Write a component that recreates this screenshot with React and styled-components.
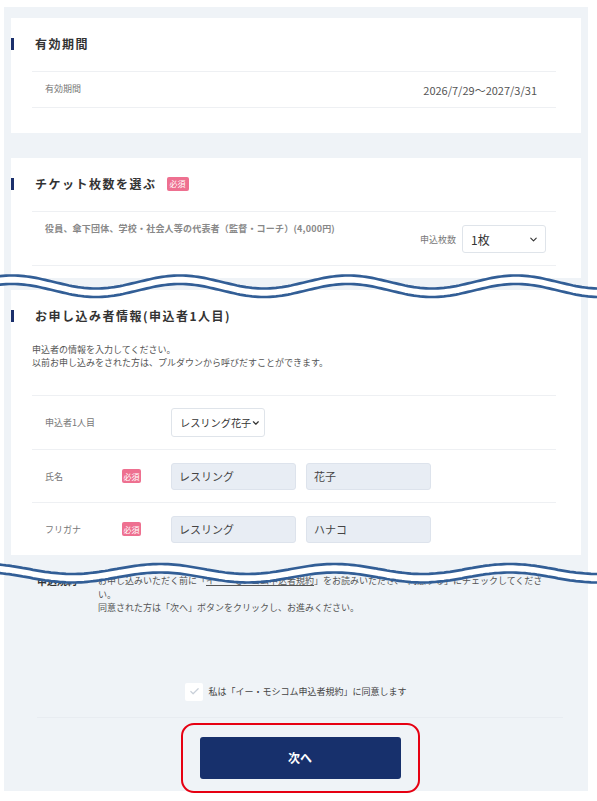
import React from 'react';
import styled, { createGlobalStyle } from 'styled-components';
import { ChevronDown, Check } from 'lucide-react';

const GlobalStyle = createGlobalStyle`
    * { box-sizing: border-box; }
    body {
        margin: 0;
        background: #fff;
        font-family: "Noto Sans CJK JP", "Noto Sans", sans-serif;
        color: #444;
    }
`;

const wavePoints = (center, amp, crest, period) => {
    const pts = [];
    for (let x = -6; x <= 603; x += 3) {
        pts.push([x, center - amp * Math.cos((2 * Math.PI * (x - crest)) / period)]);
    }
    return pts;
};

const toPath = (pts) => 'M' + pts.map(([x, y]) => `${x.toFixed(1)} ${y.toFixed(1)}`).join(' L');

// torn-edge marker laid over the page
const Wave = ({ y, amp, crest, period, gap = 8.5 }) => {
    const top = wavePoints(20, amp, crest, period);
    const bottom = top.map(([x, v]) => [x, v + gap]);
    const fill = toPath(top) + ' L' + [...bottom].reverse().map(([x, v]) => `${x.toFixed(1)} ${v.toFixed(1)}`).join(' L') + ' Z';
    return (
        <S.WaveSvg $top={y - 20} width="597" height="50" viewBox="0 0 597 50">
            <path d={fill} fill="#fff" />
            <path d={toPath(top)} fill="none" stroke="#325e96" strokeWidth="2.7" />
            <path d={toPath(bottom)} fill="none" stroke="#325e96" strokeWidth="2.7" />
        </S.WaveSvg>
    );
};

const App = () => {
    return (
        <S.Page>
            <GlobalStyle />
            <S.Panel>
                {/* 有効期間 */}
                <S.Card $pb={25}>
                    <S.Title>有効期間</S.Title>
                    <S.Row $h={37} $last>
                        <S.Label $lift>有効期間</S.Label>
                        <S.Value>2026/7/29〜2027/3/31</S.Value>
                    </S.Row>
                </S.Card>

                {/* チケット枚数 */}
                <S.Card $pb={12} $mt={25}>
                    <S.Title>
                        チケット枚数を選ぶ
                        <S.Badge $big>必須</S.Badge>
                    </S.Title>
                    <S.Row $h={55} $last>
                        <S.TicketName>役員、傘下団体、学校・社会人等の代表者（監督・コーチ）(4,000円)</S.TicketName>
                        <S.Quantity>
                            <S.Label>申込枚数</S.Label>
                            <S.SelectBox $w={84} $h={28}>
                                <S.SelectText $size={12}>1枚</S.SelectText>
                                <ChevronDown size={11} strokeWidth={2.4} color="#333" />
                            </S.SelectBox>
                        </S.Quantity>
                    </S.Row>
                </S.Card>

                {/* 申込者情報 */}
                <S.Card $pb={0} $mt={12}>
                    <S.Title>お申し込み者情報(申込者1人目)</S.Title>
                    <S.Note>
                        申込者の情報を入力してください。<br />
                        以前お申し込みをされた方は、プルダウンから呼びだすことができます。
                    </S.Note>
                    <S.FormRow $h={54}>
                        <S.Label>申込者1人目</S.Label>
                        <span />
                        <S.Fields>
                            <S.SelectBox $w={94} $h={29} $tight>
                                <S.SelectText $size={10.2}>レスリング花子</S.SelectText>
                                <ChevronDown size={10} strokeWidth={3} color="#333" />
                            </S.SelectBox>
                        </S.Fields>
                    </S.FormRow>
                    <S.FormRow $h={53}>
                        <S.Label>氏名</S.Label>
                        <S.Badge>必須</S.Badge>
                        <S.Fields>
                            <S.Input readOnly value="レスリング" />
                            <S.Input readOnly value="花子" />
                        </S.Fields>
                    </S.FormRow>
                    <S.FormRow $h={53}>
                        <S.Label>フリガナ</S.Label>
                        <S.Badge>必須</S.Badge>
                        <S.Fields>
                            <S.Input readOnly value="レスリング" />
                            <S.Input readOnly value="ハナコ" />
                        </S.Fields>
                    </S.FormRow>
                </S.Card>

                {/* 申込規約 */}
                <S.Terms>
                    <S.TermsLabel>申込規約</S.TermsLabel>
                    <S.TermsText>
                        お申し込みいただく前に「<S.TermsLink>イー・モシコム申込者規約</S.TermsLink>」をお読みいただき、「同意する」にチェックしてください。<br />
                        同意された方は「次へ」ボタンをクリックし、お進みください。
                    </S.TermsText>
                </S.Terms>

                <S.Agree>
                    <S.CheckBox>
                        <Check size={11} strokeWidth={2.6} color="#c9d0d9" />
                    </S.CheckBox>
                    <S.AgreeText>私は「イー・モシコム申込者規約」に同意します</S.AgreeText>
                </S.Agree>

                <S.Footer>
                    <S.Highlight>
                        <S.NextButton>次へ</S.NextButton>
                    </S.Highlight>
                </S.Footer>
            </S.Panel>

            <Wave y={281.5} amp={6.5} crest={180} period={168} />
            <Wave y={568.5} amp={5} crest={160} period={175} />
        </S.Page>
    );
};

const S = {};

S.Page = styled.div`
    position: relative;
    width: 597px;
    min-height: 801px;
    padding-top: 7px;
    overflow: hidden;
`;

S.Panel = styled.div`
    width: 584px;
    margin-left: 4px;
    background: #eff3f7;
    padding: 11px 7px 0;
`;

S.Card = styled.div`
    background: #fff;
    margin-top: ${({ $mt }) => $mt || 0}px;
    padding: 19px 25px ${({ $pb }) => $pb}px 21px;
`;

S.Title = styled.h2`
    display: flex;
    align-items: center;
    height: 13px;
    margin: 0 0 21px -21px;
    font-size: 12px;
    font-weight: bold;
    letter-spacing: 1.5px;
    color: #333;

    &::before {
        content: '';
        flex-shrink: 0;
        width: 3px;
        height: 12px;
        margin-right: 21px;
        background: #1b2f6b;
    }
`;

S.Badge = styled.span`
    display: inline-flex;
    align-items: center;
    justify-content: center;
    width: ${({ $big }) => ($big ? 22 : 19)}px;
    height: 14px;
    margin-left: ${({ $big }) => ($big ? 10 : 0)}px;
    border-radius: 2px;
    background: #ee7090;
    color: #fff;
    font-size: 8px;
    font-weight: normal;
    letter-spacing: 0;
`;

S.Row = styled.div`
    display: flex;
    align-items: center;
    justify-content: space-between;
    height: ${({ $h }) => $h}px;
    padding: 0 10px 0 13px;
    border-top: 1px solid #eef0f3;
    border-bottom: ${({ $last }) => ($last ? '1px solid #eef0f3' : 'none')};
`;

S.Label = styled.span`
    margin-top: ${({ $lift }) => ($lift ? -3 : 0)}px;
    font-size: 9px;
    color: #777;
`;

S.Value = styled.span`
    margin-right: 9px;
    font-size: 11px;
    color: #555;
`;

S.TicketName = styled.span`
    align-self: flex-start;
    margin-top: 10px;
    font-size: 9px;
    line-height: 13px;
    font-weight: bold;
    letter-spacing: 0.2px;
    color: #888;
`;

S.Quantity = styled.div`
    display: flex;
    align-items: center;
    gap: 6px;
    margin-top: 1px;
`;

S.SelectBox = styled.div`
    display: flex;
    align-items: center;
    justify-content: space-between;
    width: ${({ $w }) => $w}px;
    height: ${({ $h }) => $h}px;
    padding: ${({ $tight }) => ($tight ? '0 3px 0 8px' : '0 6px 0 8px')};
    background: #fff;
    border: 1px solid #dfe4ea;
    border-radius: 3px;
`;

S.SelectText = styled.span`
    font-size: ${({ $size }) => $size}px;
    color: #333;
    white-space: nowrap;
`;

S.Note = styled.p`
    margin: 20px 0 26px;
    font-size: 9px;
    line-height: 13px;
    color: #555;
`;

S.FormRow = styled.div`
    display: grid;
    grid-template-columns: 77px 49px 1fr;
    align-items: center;
    height: ${({ $h }) => $h}px;
    padding-left: 13px;
    border-top: 1px solid #eef0f3;
`;

S.Fields = styled.div`
    display: flex;
    gap: 10px;
`;

S.Input = styled.input`
    width: 125px;
    height: 27px;
    padding: 0 7px;
    background: #e8edf4;
    border: 1px solid #dde3ec;
    border-radius: 3px;
    font-family: inherit;
    font-size: 11px;
    color: #444;
    outline: none;
`;

S.Terms = styled.div`
    display: flex;
    margin-top: 19px;
    padding-left: 26px;
`;

S.TermsLabel = styled.span`
    width: 61px;
    flex-shrink: 0;
    font-size: 10px;
    line-height: 13.5px;
    font-weight: bold;
    color: #333;
`;

S.TermsText = styled.p`
    width: 455px;
    margin: 0;
    font-size: 9px;
    line-height: 13.5px;
    color: #555;
`;

S.TermsLink = styled.span`
    text-decoration: underline;
`;

S.Agree = styled.div`
    display: flex;
    align-items: center;
    justify-content: center;
    gap: 5px;
    margin-top: 68px;
`;

S.CheckBox = styled.span`
    display: flex;
    align-items: center;
    justify-content: center;
    width: 18px;
    height: 18px;
    background: #fff;
    border-radius: 2px;
`;

S.AgreeText = styled.span`
    font-size: 9px;
    color: #444;
`;

S.Footer = styled.div`
    display: flex;
    justify-content: center;
    margin: 16px 18px 0 26px;
    padding-top: 5px;
    border-top: 1px solid #e8ecf1;
`;

S.Highlight = styled.div`
    margin-bottom: -2px;
    padding: 12px 17px;
    border: 2.5px solid #e60012;
    border-radius: 13px;
`;

S.NextButton = styled.button`
    display: block;
    width: 201px;
    height: 42px;
    border: none;
    border-radius: 3px;
    background: #17306c;
    color: #fff;
    font-family: inherit;
    font-size: 12px;
    font-weight: bold;
    cursor: pointer;
`;

S.WaveSvg = styled.svg`
    position: absolute;
    left: 0;
    top: ${({ $top }) => $top}px;
    pointer-events: none;
`;

export default App;
